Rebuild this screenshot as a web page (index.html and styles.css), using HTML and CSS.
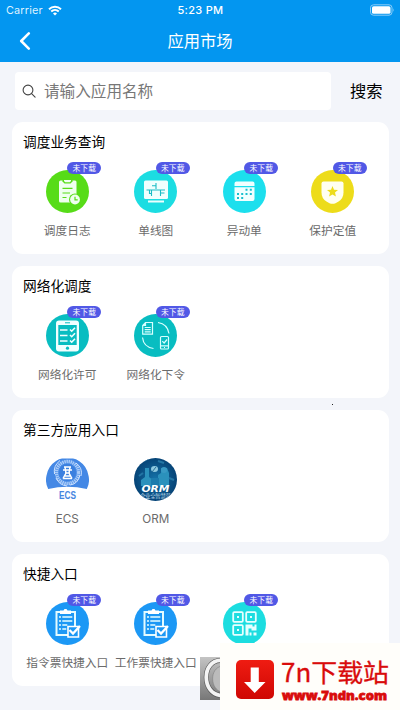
FILE: index.html
```html
<!DOCTYPE html>
<html lang="zh-CN">
<head>
<meta charset="utf-8">
<title>应用市场</title>
<link rel="stylesheet" href="styles.css">
</head>
<body>
<svg class="defs" aria-hidden="true">
  <defs>
    <symbol id="clipboard" viewBox="0 0 43 43">
      <path d="M10.500 10h18.500v23h-18.500z" fill="none" stroke="#e4fbff" stroke-width="2"/>
      <path d="M14 8.500h3.500l1-1.500h2l1 1.500H25v3.500H14z" fill="#fff"/>
      <path d="M13 15h2M16.300 15h10M13 19h2M16.300 19h10M13 23h2M16.300 23h5M13 27h2M16.300 27h4" stroke="#e4fbff" stroke-width="1.500"/>
      <path d="M22 24.500h10.500v10.500H22z" fill="#1c98f5" stroke="#fff" stroke-width="1.600"/>
      <path d="M23.500 28l3.500 3.500 7-7.500" fill="none" stroke="#fff" stroke-width="2.300"/>
    </symbol>
  </defs>
</svg>
<header class="header">
  <div class="status">
    <div class="carrier"><span>Carrier</span>
      <svg width="14" height="11" viewBox="0 0 14 11" fill="none" stroke="#fff" stroke-width="1.900"><path d="M1 4.200a8.600 8.600 0 0 1 12 0M3.200 6.500a5.500 5.500 0 0 1 7.600 0"/><path d="M5 8.400a3 3 0 0 1 4 0L7 10.400z" fill="#fff" stroke="none"/></svg>
    </div>
    <div class="time">5:23 PM</div>
    <svg class="battery" width="25" height="12" viewBox="0 0 25 12"><rect x=".5" y=".8" width="21.500" height="10.400" rx="3" fill="none" stroke="#8bcdf8"/><rect x="2" y="2.200" width="18.500" height="7.600" rx="1.600" fill="#fff"/><path d="M23.300 4.200q1.400 1.800 0 3.600z" fill="#8bcdf8"/></svg>
  </div>
  <div class="navbar">
    <svg class="back" width="12" height="18" viewBox="0 0 12 18"><path d="M9.800 1.400L2.200 9l7.600 7.600" fill="none" stroke="#fff" stroke-width="2.500" stroke-linecap="round" stroke-linejoin="round"/></svg>
    <h1>应用市场</h1>
  </div>
</header>
<div class="search">
  <div class="field">
    <svg width="14" height="14" viewBox="0 0 14 14" fill="none" stroke="#444" stroke-width="1.100"><circle cx="6" cy="6" r="4.900"/><path d="M9.600 9.700l3.500 3.500" stroke-linecap="round"/></svg>
    <span>请输入应用名称</span>
  </div>
  <div class="go">搜索</div>
</div>
<main class="cards">
  <section class="card">
    <h2>调度业务查询</h2>
    <div class="grid">
      <div class="app"><div class="icon"><svg viewBox="0 0 43 43"><circle cx="21.500" cy="21.500" r="21.500" fill="#57dc18"/>
        <rect x="13" y="10.500" width="17.500" height="22" rx="1.500" fill="#effff0"/><path d="M16.500 10h10v1.500l-2 2h-6l-2-2z" fill="#57dc18"/><path d="M18 10h7v1l-1.200 1.300h-4.600L18 11z" fill="#effff0"/><path d="M16.500 18.300h10M16.500 23h7.500M16.500 27.500h4" stroke="#57dc18" stroke-width="1.200"/><circle cx="29" cy="29.500" r="6" fill="#57dc18"/><circle cx="29" cy="29.500" r="4.900" fill="#effff0"/><path d="M29 26.700v3.200h2.700" fill="none" stroke="#57dc18" stroke-width="1.200"/></svg><span class="badge">未下载</span></div><p>调度日志</p></div>
      <div class="app"><div class="icon"><svg viewBox="0 0 43 43"><circle cx="21.500" cy="21.500" r="21.500" fill="#1cdde2"/>
        <rect x="10" y="10.500" width="24" height="18.500" rx="1.500" fill="#effffe"/><path d="M14 30.500h16v2H14z" fill="#effffe"/><path d="M22 13v6M18 15.800h4M12.500 20h18.500M15.500 20v3.500h2M26.500 20v6M26.500 23h4M17.500 20v6" stroke="#1abcc5" stroke-width="1.100" fill="none"/></svg><span class="badge">未下载</span></div><p>单线图</p></div>
      <div class="app"><div class="icon"><svg viewBox="0 0 43 43"><circle cx="21.500" cy="21.500" r="21.500" fill="#1cdfed"/>
        <path d="M11.500 16v-2.500q0-2 2-2h16q2 0 2 2V16zM11.500 17.200h20V29q0 2-2 2h-16q-2 0-2-2z" fill="#f1ffff"/><path d="M22.500 19.700h2M26.800 19.700h2M14 24h2M18.200 24h2M22.500 24h2M26.800 24h2M14 28h2M18.200 28h2" stroke="#18bfcf" stroke-width="1.900"/></svg><span class="badge">未下载</span></div><p>异动单</p></div>
      <div class="app"><div class="icon"><svg viewBox="0 0 43 43"><circle cx="21.500" cy="21.500" r="21.500" fill="#eddc1a"/>
        <path d="M12.500 11.500h18q2 0 2 2v9q0 6-5 9l-3 1.700q-3 1-6 0l-3-1.700q-5-3-5-9v-9q0-2 2-2z" fill="#fffff0"/><path d="M21.500 16l1.500 3.700 4 .3-3 2.600.9 3.900-3.400-2.100-3.400 2.100.9-3.900-3-2.600 4-.3z" fill="#eddc1a"/></svg><span class="badge">未下载</span></div><p>保护定值</p></div>
    </div>
  </section>
  <section class="card">
    <h2>网络化调度</h2>
    <div class="grid">
      <div class="app"><div class="icon"><svg viewBox="0 0 43 43"><circle cx="21.500" cy="21.500" r="21.500" fill="#08bdc1"/>
        <rect x="10" y="6.500" width="23" height="31" rx="3" fill="#f1ffff"/><path d="M12.300 11h18.400v20H12.300z" fill="#08bdc1"/><path d="M19 8.800h5" stroke="#08bdc1"/><circle cx="21.500" cy="34.200" r="1.600" fill="#08bdc1"/><path d="M14 16h7.500M14 21.500h7.500M14 27h7.500" stroke="#f1ffff" stroke-width="1.700"/><path d="M24 15.500l1.700 1.700 3.300-3.500M24 21l1.700 1.700 3.300-3.500M24 26.500l1.700 1.700 3.300-3.500" fill="none" stroke="#f1ffff" stroke-width="1.600"/></svg><span class="badge">未下载</span></div><p>网络化许可</p></div>
      <div class="app"><div class="icon"><svg viewBox="0 0 43 43"><circle cx="21.500" cy="21.500" r="21.500" fill="#08bdc1"/>
        <g fill="none" stroke="#d8ffff" stroke-width="1.200"><path d="M11.500 8.500h7v11.700H8.700V11.500zM11.500 8.500v3H8.700M10.700 13.500h6M10.700 15.700h6M10.700 17.900h6"/><path d="M24 8.500q9.500 1.500 11 11M8.500 23.500q1 9.500 11 11"/><rect x="26.500" y="22.500" width="8" height="12.500" rx="1"/><path d="M26.500 31.800h8M28.300 27.200l1.800 1.800 3-3.500M30 33.500h1"/></g></svg><span class="badge">未下载</span></div><p>网络化下令</p></div>
    </div>
  </section>
  <section class="card">
    <h2>第三方应用入口</h2>
    <div class="grid">
      <div class="app"><div class="icon"><svg viewBox="0 0 43 43"><path d="M2.200 31Q-1 25 .4 18A21.500 21.500 0 0 1 10 3Q13 .8 16 .5h11Q30 .8 33 3a21.500 21.500 0 0 1 9.600 15Q44 25 40.800 31 21.500 26.500 2.200 31z" fill="#4488e5"/>
        <circle cx="21.500" cy="14.500" r="11" fill="none" stroke="#a9cbf8" stroke-width="3.400" stroke-dasharray="1.500 .6"/><path d="M14 2.500Q7 8 8.500 16M30 5q7 5 5 13M34 17q-2 9-10 10M10 20q3 7 11 8" fill="none" stroke="#d3e5ff" stroke-width="1"/><circle cx="21.500" cy="14.500" r="8.500" fill="#3b80df"/><path d="M18 9h7M17 12h9M19 9l1 6-3 5.500M24 9l-1 6 3 5.500M19 15h5M18 18h7M17 20.500h9" fill="none" stroke="#fff" stroke-width="1.500"/><text x="13" y="40.500" class="ecs" textLength="17" lengthAdjust="spacingAndGlyphs">ECS</text></svg></div><p>ECS</p></div>
      <div class="app"><div class="icon"><svg viewBox="0 0 43 43"><defs><clipPath id="disc"><circle cx="21.500" cy="21.500" r="21.500"/></clipPath><radialGradient id="sea"><stop stop-color="#1573a9"/><stop offset="1" stop-color="#064477"/></radialGradient></defs>
        <g clip-path="url(#disc)"><path d="M0 0h43v43H0z" fill="url(#sea)"/><path d="M11 10h4v9l4 3v6H7v-6l4-3zM27 10h6l2 5v13H24V17l3-2z" fill="#2b91bc"/><path d="M17 20h8v8h-8z" fill="#1c7bad"/><circle cx="30" cy="12" r="3" fill="#3999c4"/><ellipse cx="20.500" cy="11" rx="3.500" ry="3" fill="#8fc9df"/><path d="M18 14l4-5" stroke="#286e96"/><path d="M10 3l5-3M24 3l6 2M5 18l4-3M35 20l5 2" stroke="#2375a4" stroke-width="2"/><text x="7.500" y="34" class="orm" textLength="28" lengthAdjust="spacingAndGlyphs">ORM</text><text x="6" y="40.200" class="orm-sub" textLength="31">企业全智慧营</text></g></svg></div><p>ORM</p></div>
    </div>
  </section>
  <section class="card">
    <h2>快捷入口</h2>
    <div class="grid">
      <div class="app"><div class="icon"><svg viewBox="0 0 43 43"><circle cx="21.500" cy="21.500" r="21.500" fill="#1c98f5"/><use href="#clipboard"/></svg><span class="badge">未下载</span></div><p>指令票快捷入口</p></div>
      <div class="app"><div class="icon"><svg viewBox="0 0 43 43"><circle cx="21.500" cy="21.500" r="21.500" fill="#1c98f5"/><use href="#clipboard"/></svg><span class="badge">未下载</span></div><p>工作票快捷入口</p></div>
      <div class="app"><div class="icon"><svg viewBox="0 0 43 43"><circle cx="21.500" cy="21.500" r="21.500" fill="#1cdde0"/>
        <g fill="none" stroke="#e6ffff" stroke-width="1.800"><rect x="10.200" y="10.200" width="9.600" height="9.600" rx="1"/><rect x="23.200" y="10.200" width="9.600" height="9.600" rx="1"/><rect x="10.200" y="23.200" width="9.600" height="9.600" rx="1"/></g><path d="M14 14h2v2h-2zM27 14h2v2h-2zM14 27h2v2h-2zM22.500 22.500h7v2h2v-2h2v6h-5v-2h-3v7h-3zM26.500 30.500h2v3h-2zM30.500 30.500h3v3h-3z" fill="#e6ffff"/></svg><span class="badge">未下载</span></div></div>
    </div>
  </section>
</main>
<i class="speck"></i>
<div class="watermark">
  <svg class="disc-edge" width="20" height="43" viewBox="0 0 20 43"><defs><linearGradient id="steel" x2="0" y2="1"><stop stop-color="#c4c4c4"/><stop offset="1" stop-color="#777"/></linearGradient></defs><path d="M0 0h20v43H0z" fill="url(#steel)"/><path d="M22 3.500C1 2 1 38 22 38.500" fill="none" stroke="#555" stroke-width="5"/><path d="M22 3.500C1 2 1 38 22 38.500" fill="none" stroke="#f4f4f4" stroke-width="3.800"/><path d="M22 9C9 11 10 33 22 35z" fill="#bbb" stroke="#777" stroke-width=".5"/></svg>
  <div class="brand">
    <svg width="38" height="39" viewBox="0 0 38 39"><defs><linearGradient id="red" x2="0" y2="1"><stop stop-color="#ef1c12"/><stop offset="1" stop-color="#cf0703"/></linearGradient></defs><rect width="38" height="39" rx="5" fill="url(#red)"/><path d="M14.700 7.500h8.100v14.500h6.700L18.700 33 8 22h6.700z" fill="#fff"/></svg>
    <svg width="118" height="56" viewBox="0 0 118 56"><text x="0" y="29" class="site" textLength="108" lengthAdjust="spacingAndGlyphs">7n下载站</text><text x="1" y="47" class="url" textLength="105" lengthAdjust="spacingAndGlyphs">www.7ndn.com</text></svg>
  </div>
</div>
</body>
</html>
```
FILE: styles.css
```css
* { box-sizing: border-box; margin: 0; padding: 0; }
body {
  position: relative;
  width: 400px;
  height: 710px;
  overflow: hidden;
  background: #f3f5fa;
  color: #111;
  font-family: Inter, "Noto Sans CJK SC", sans-serif;
}
svg { display: block; }
.defs { position: absolute; width: 0; height: 0; }
.header { height: 62px; background: #0396f0; color: #fff; }
.status {
  display: grid;
  grid-template-columns: 1fr auto 1fr;
  align-items: center;
  height: 20px;
  padding: 0 5px 0 6px;
}
.carrier { display: flex; align-items: center; gap: 5px; font-size: 10.8px; letter-spacing: .2px; color: #dff2ff; }
.time { font-size: 11px; font-weight: 500; letter-spacing: .3px; }
.battery { justify-self: end; }
.navbar { display: grid; grid-template-columns: 1fr auto 1fr; align-items: center; height: 42px; }
.back { margin-left: 19px; }
h1 { font-size: 16.300px; line-height: 24px; font-weight: 400; }
.search { display: flex; align-items: center; height: 38px; margin: 10px 0 12px 15px; }
.field {
  display: flex;
  align-items: center;
  gap: 8px;
  width: 316px;
  height: 38px;
  padding-left: 7px;
  border-radius: 4px;
  background: #fff;
  color: #777;
  font-size: 15.600px;
}
.field span, .go { margin-top: -2px; }
.go { margin-left: 19px; font-size: 16.300px; color: #000; }
.cards { display: grid; gap: 12px; padding: 0 11.500px 0 12px; }
.card { height: 132px; padding: 9px 11px 0; border-radius: 11px; background: #fff; }
h2 { height: 22px; font-size: 13.700px; line-height: 22px; font-weight: 400; color: #000; }
.grid { display: grid; grid-template-columns: repeat(4, 88.500px); margin-top: 17px; }
.app { display: flex; flex-direction: column; align-items: center; }
.icon { position: relative; width: 43px; height: 43px; }
.badge {
  position: absolute;
  left: 21.500px;
  top: -8px;
  width: 34px;
  height: 12px;
  border-radius: 6px;
  background: #5158e6;
  color: #fff;
  font-size: 7.800px;
  line-height: 12px;
  text-align: center;
  white-space: nowrap;
}
.app p { margin-top: 9px; font-size: 11.700px; line-height: 18px; color: #6b6b6b; white-space: nowrap; }
.ecs { font: bold 11px "Liberation Sans", sans-serif; fill: #4686df; }
.orm { font: italic bold 9px "DejaVu Sans", sans-serif; fill: #fff; }
.orm-sub { font: 5.500px "Noto Sans CJK SC", sans-serif; fill: #b9d6e8; }
.speck { position: absolute; left: 332px; top: 404px; width: 1px; height: 1px; background: #222; }
.watermark { position: absolute; left: 200px; top: 643px; display: flex; width: 200px; height: 67px; }
.disc-edge { margin-top: 14px; }
.brand { display: flex; gap: 7px; width: 180px; padding: 17px 0 0 16px; background: #fffefa; }
.brand svg:first-child { flex: none; }
.brand svg:last-child { flex: none; margin-top: -7px; }
.site { font: 25px "Noto Sans CJK SC", sans-serif; fill: #d90b0b; stroke: #d90b0b; stroke-width: .3px; }
.url { font: 800 13px "Open Sans", sans-serif; fill: #d90b0b; stroke: #d90b0b; stroke-width: .8px; }
```
